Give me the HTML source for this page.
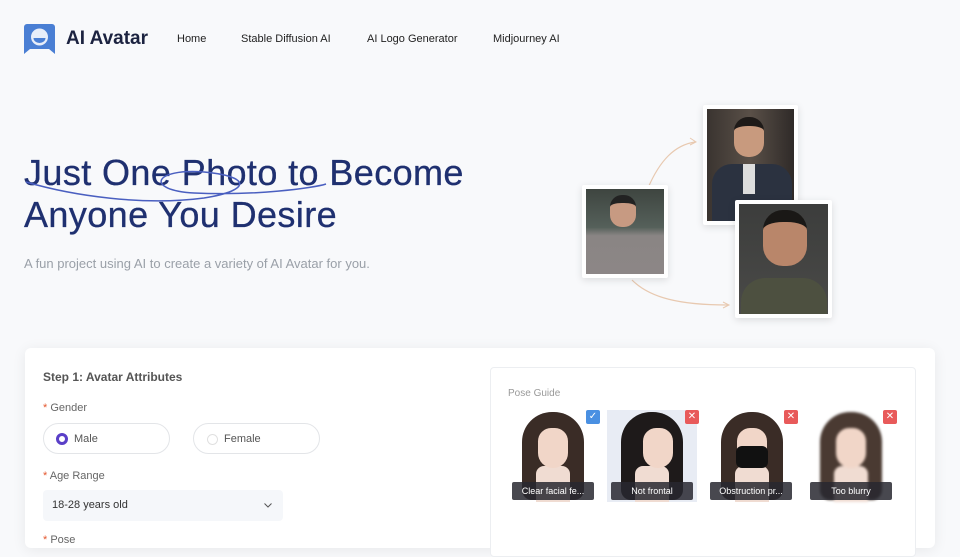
<!DOCTYPE html>
<html><head><meta charset="utf-8"><style>
*{margin:0;padding:0;box-sizing:border-box}
body{width:960px;height:540px;overflow:hidden;background:#f8f9fb;font-family:"Liberation Sans",sans-serif;position:relative;color:#222}
.abs{position:absolute}
.nav a{position:absolute;top:33px;font-size:11px;color:#222;text-decoration:none}
.frame{position:absolute;background:#fff;box-shadow:0 2px 8px rgba(0,0,0,.12);border-radius:2px}
.frame div{position:absolute;left:4px;top:4px;right:4px;bottom:4px;overflow:hidden}
.pose{position:absolute;top:410px;width:90px;height:92px;background:#fff;overflow:hidden}
.pose .hair{position:absolute;left:14px;top:2px;width:62px;height:88px;background:#3a2c26;border-radius:30px 30px 10px 10px}
.pose .face{position:absolute;left:30px;top:18px;width:30px;height:40px;background:#f1d6c8;border-radius:14px 14px 16px 16px}
.pose .neck{position:absolute;left:28px;top:56px;width:34px;height:36px;background:#f0dcd2;border-radius:8px 8px 0 0}
.lbl{position:absolute;top:482px;width:82px;height:18px;background:rgba(40,40,48,.85);color:#fff;font-size:9px;text-align:center;line-height:18px;border-radius:2px}
.badge{position:absolute;top:410px;width:14px;height:14px;border-radius:2px;color:#fff;font-size:10px;text-align:center;line-height:14px}
</style></head><body>
<svg class="abs" style="left:24px;top:24px" width="31" height="30" viewBox="0 0 31 30"><path d="M3 0h25a3 3 0 0 1 3 3v27l-6-5H6l-6 5V3a3 3 0 0 1 3-3z" fill="#4a7fd4"/><circle cx="15.5" cy="13" r="8.5" fill="#e8eef9"/><path d="M9.5 14h12a6 5 0 0 1-12 0z" fill="#4a7fd4"/></svg>
<div class="abs" style="left:66px;top:28px;font-size:19px;font-weight:bold;color:#1c2340">AI Avatar</div>
<div class="nav"><a style="left:177px">Home</a><a style="left:241px">Stable Diffusion AI</a><a style="left:367px">AI Logo Generator</a><a style="left:493px">Midjourney AI</a></div>
<div class="abs" style="left:24px;top:152px;font-size:36px;line-height:42px;color:#1f3070;letter-spacing:0.4px;-webkit-text-stroke:0.3px #1f3070">Just One Photo to Become<br>Anyone You Desire</div>
<svg class="abs" style="left:24px;top:160px" width="310" height="50"><path d="M2 22 C50 36 120 46 180 38 C230 30 225 16 180 12 C130 8 120 30 170 33 C230 36 290 28 302 24" fill="none" stroke="#4a5fc0" stroke-width="1.5"/></svg>
<div class="abs" style="left:24px;top:256px;font-size:13px;color:#9aa0a8">A fun project using AI to create a variety of AI Avatar for you.</div>
<svg class="abs" style="left:620px;top:130px" width="120" height="180"><path d="M28 58 C40 30 55 15 75 12" fill="none" stroke="#e8c9b0" stroke-width="1.2"/><path d="M70 8l6 4-6 3" fill="none" stroke="#e8c9b0"/><path d="M12 150 C30 168 60 175 108 175" fill="none" stroke="#e8c9b0" stroke-width="1.2"/><path d="M103 172l6 3-6 3" fill="none" stroke="#e8c9b0"/></svg>
<div class="frame" style="left:582px;top:185px;width:86px;height:93px"><div style="background:linear-gradient(#3e4540 0,#55605a 45%,#8a8584 55%,#8c8686 100%)"><span class="abs" style="left:24px;top:6px;width:26px;height:32px;background:#c79a82;border-radius:12px;border-top:8px solid #222"></span></div></div>
<div class="frame" style="left:703px;top:105px;width:95px;height:120px"><div style="background:linear-gradient(90deg,#3a3430,#5a5048 50%,#2f2a28)"><span class="abs" style="left:27px;top:8px;width:30px;height:40px;background:#c89a7e;border-radius:14px;border-top:9px solid #1e1a18"></span><span class="abs" style="left:5px;top:55px;width:80px;height:57px;background:#2b3240;border-radius:20px 20px 0 0"></span><span class="abs" style="left:36px;top:55px;width:12px;height:30px;background:#ddd"></span></div></div>
<div class="frame" style="left:735px;top:200px;width:97px;height:118px"><div style="background:linear-gradient(#3c3d3c,#4a4a48)"><span class="abs" style="left:24px;top:6px;width:44px;height:56px;background:#b9866a;border-radius:20px;border-top:12px solid #1a1816"></span><span class="abs" style="left:2px;top:74px;width:86px;height:40px;background:#4d5040;border-radius:24px 24px 0 0"></span></div></div>
<div class="abs" style="left:25px;top:348px;width:910px;height:200px;background:#fff;border-radius:6px;box-shadow:0 2px 14px rgba(0,0,0,.07)"></div>
<div class="abs" style="left:43px;top:370px;font-size:12px;font-weight:bold;color:#555">Step 1: Avatar Attributes</div>
<div class="abs" style="left:43px;top:402px;font-size:11px;color:#666"><span style="color:#e4572e">*</span> Gender</div>
<div class="abs" style="left:43px;top:423px;width:127px;height:31px;border:1px solid #e3e5e8;border-radius:16px"><span class="abs" style="left:12px;top:9px;width:12px;height:12px;border:3.5px solid #5a3fc8;border-radius:50%"></span><span class="abs" style="left:30px;top:9px;font-size:11px;color:#555">Male</span></div>
<div class="abs" style="left:193px;top:423px;width:127px;height:31px;border:1px solid #e3e5e8;border-radius:16px"><span class="abs" style="left:13px;top:10px;width:11px;height:11px;border:1px solid #e0e0e0;border-radius:50%"></span><span class="abs" style="left:30px;top:9px;font-size:11px;color:#555">Female</span></div>
<div class="abs" style="left:43px;top:470px;font-size:11px;color:#666"><span style="color:#e4572e">*</span> Age Range</div>
<div class="abs" style="left:43px;top:490px;width:240px;height:31px;background:#f5f7fa;border-radius:4px"><span class="abs" style="left:9px;top:9px;font-size:11px;color:#333">18-28 years old</span><svg class="abs" style="left:221px;top:13px" width="8" height="5"><path d="M.5.5l3.5 3.5 3.5-3.5" fill="none" stroke="#555"/></svg></div>
<div class="abs" style="left:43px;top:534px;font-size:11px;color:#666"><span style="color:#e4572e">*</span> Pose</div>
<div class="abs" style="left:490px;top:367px;width:426px;height:190px;border:1px solid #eceef1;border-radius:4px;background:#fff"></div>
<div class="abs" style="left:508px;top:388px;font-size:10px;color:#999">Pose Guide</div>
<div class="pose" style="left:508px"><div class="hair"></div><div class="neck"></div><div class="face"></div></div>
<div class="pose" style="left:607px;background:#e8ecf4"><div class="hair" style="background:#1e1a1a"></div><div class="neck"></div><div class="face" style="left:36px"></div></div>
<div class="pose" style="left:707px"><div class="hair"></div><div class="neck"></div><div class="face"></div><span class="abs" style="left:29px;top:36px;width:32px;height:22px;background:#111;border-radius:6px"></span></div>
<div class="pose" style="left:806px;filter:blur(1.2px)"><div class="hair" style="background:#4a3a32"></div><div class="neck"></div><div class="face"></div></div>
<div class="lbl" style="left:512px">Clear facial fe...</div>
<div class="lbl" style="left:611px">Not frontal</div>
<div class="lbl" style="left:710px">Obstruction pr...</div>
<div class="lbl" style="left:810px">Too blurry</div>
<div class="badge" style="left:586px;background:#4a90e2">✓</div>
<div class="badge" style="left:685px;background:#e85a5a">✕</div>
<div class="badge" style="left:784px;background:#e85a5a">✕</div>
<div class="badge" style="left:883px;background:#e85a5a">✕</div>
</body></html>
